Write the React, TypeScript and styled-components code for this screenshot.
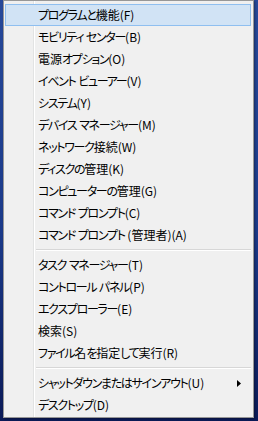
import styled, {createGlobalStyle} from "styled-components";

const GlobalStyle = createGlobalStyle`
  html, body {
    margin: 0;
    padding: 0;
  }
  body {
    width: 258px;
    height: 421px;
    overflow: hidden;
    background: linear-gradient(180deg, #27499a 0%, #1b3a8a 55%, #0b1a58 100%);
    font-family: "Noto Sans CJK JP", "Noto Sans", sans-serif;
  }
`;

type Entry = { label: string; arrow?: boolean; active?: boolean };

const groups: Entry[][] = [
  [
    {label: "プログラムと機能(F)", active: true},
    {label: "モビリティ センター(B)"},
    {label: "電源オプション(O)"},
    {label: "イベント ビューアー(V)"},
    {label: "システム(Y)"},
    {label: "デバイス マネージャー(M)"},
    {label: "ネットワーク接続(W)"},
    {label: "ディスクの管理(K)"},
    {label: "コンピューターの管理(G)"},
    {label: "コマンド プロンプト(C)"},
    {label: "コマンド プロンプト (管理者)(A)"},
  ],
  [
    {label: "タスク マネージャー(T)"},
    {label: "コントロール パネル(P)"},
    {label: "エクスプローラー(E)"},
    {label: "検索(S)"},
    {label: "ファイル名を指定して実行(R)"},
  ],
  [
    {label: "シャットダウンまたはサインアウト(U)", arrow: true},
    {label: "デスクトップ(D)"},
  ],
];

// kana in the system UI font is narrower than in Noto, so tighten those runs
const splitKana = (text: string) =>
  text.split(/([\u3040-\u30ff]+)/).map((part, i) =>
    /[\u3040-\u30ff]/.test(part) ? <Kana key={i}>{part}</Kana> : part
  );

export default function App(): JSX.Element {
  return (
    <>
      <GlobalStyle/>
      <Desktop>
        <Menu>
          {groups.map((group, gi) => (
            <Group key={gi}>
              {gi > 0 && <Separator/>}
              {group.map((item) => (
                <Item key={item.label} $active={item.active}>
                  <Label>{splitKana(item.label)}</Label>
                  {item.arrow && (
                    <Arrow width="4" height="7" viewBox="0 0 4 7">
                      <path d="M0 0 L4 3.5 L0 7 Z" fill="#000"/>
                    </Arrow>
                  )}
                </Item>
              ))}
            </Group>
          ))}
        </Menu>
      </Desktop>
    </>
  );
}

const Desktop = styled.div`
  padding-left: 3px;
`;

const Menu = styled.div`
  box-sizing: border-box;
  width: 251px;
  height: 418px;
  border: 1px solid #979797;
  padding: 3px 2px 1px 1px;
  background-color: #f0f0f0;
  background-image: linear-gradient(90deg, transparent 29px, #e2e3e3 29px, #e2e3e3 30px, #ffffff 30px, #ffffff 31px, transparent 31px);
  box-shadow: 1px 1px 2px rgba(0, 0, 0, 0.35);
`;

const Group = styled.div`
  display: flex;
  flex-direction: column;
`;

const Separator = styled.div`
  height: 8px;
  margin-left: 31px;
  background: linear-gradient(180deg, transparent 3px, #d7d7d7 3px, #d7d7d7 4px, #ffffff 4px, #ffffff 5px, transparent 5px);
`;

const Item = styled.div<{ $active?: boolean }>`
  box-sizing: border-box;
  display: flex;
  align-items: center;
  justify-content: space-between;
  height: 22px;
  padding: 0 9px 0 32px;
  font-size: 12px;
  color: #000;
  border: 1px solid ${(p) => (p.$active ? "#8fbff0" : "transparent")};
  background: ${(p) => (p.$active ? "#d1e3f5" : "transparent")};
`;

const Label = styled.span`
  white-space: nowrap;
  line-height: 20px;
  font-feature-settings: "palt";
`;

const Kana = styled.span`
  letter-spacing: -1.3px;
`;

const Arrow = styled.svg`
  display: block;
  flex: none;
`;
